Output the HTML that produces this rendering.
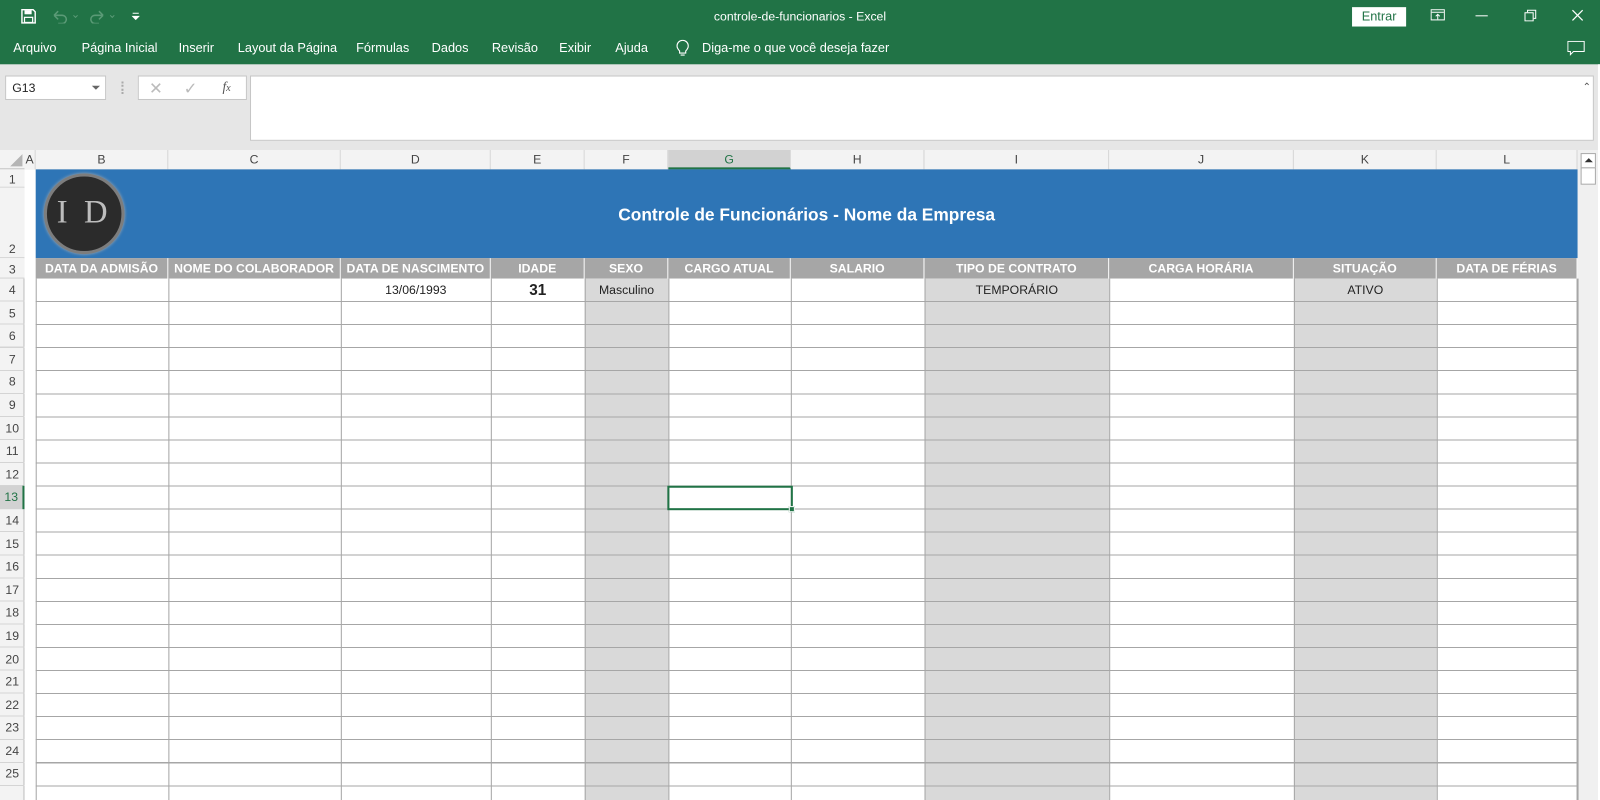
<!DOCTYPE html>
<html><head><meta charset="utf-8"><style>
*{margin:0;padding:0;box-sizing:border-box}
body{width:1600px;height:784px;overflow:hidden;background:#e6e6e6;font-family:"Liberation Sans",sans-serif;position:relative}
#w{position:absolute;left:0;top:0;width:1568px;height:768px;transform:scale(1.020408);transform-origin:0 0}
.a{position:absolute}
.top{left:0;top:0;width:1568px;height:63px;background:#217346;color:#fff}
.tab{position:absolute;top:40px;font-size:12.5px;color:#fff}
.ch{position:absolute;top:147px;height:19px;font-size:12px;color:#444;text-align:center;line-height:19px;border-right:1px solid #d4d4d4;background:#f3f3f3}
.rh{position:absolute;left:0;width:24px;font-size:12px;color:#444;text-align:center;background:#f3f3f3;border-bottom:1px solid #d4d4d4}
.hd{position:absolute;top:253px;height:20px;background:#a6a6a6;color:#fff;font-weight:bold;font-size:12px;text-align:center;line-height:21px;border-right:1px solid #fff;white-space:nowrap;overflow:hidden}
.vl{position:absolute;top:273px;width:1px;height:511px;background:#a6a6a6}
.gc{position:absolute;top:273px;height:511px;background:#d9d9d9}
.t4{position:absolute;top:273px;height:23px;line-height:23px;font-size:12px;color:#222;text-align:center}
</style></head><body><div id="w">
<div class="a top">
  <svg class="a" style="left:20px;top:8px" width="16" height="16" viewBox="0 0 16 16"><path d="M1.5 1.5h11l2 2v11h-13z" fill="none" stroke="#fff" stroke-width="1.4"/><rect x="4" y="2" width="7" height="4" fill="#fff"/><rect x="4" y="9" width="8" height="5" fill="none" stroke="#fff" stroke-width="1.2"/></svg>
  <svg class="a" style="left:50px;top:9px" width="40" height="14" viewBox="0 0 40 14"><path d="M3 6h8a4 4 0 0 1 0 8H7M3 6l4-4M3 6l4 4" fill="none" stroke="#5a9a76" stroke-width="1.5"/><path d="M22 6l2 2 2-2" fill="none" stroke="#5a9a76"/></svg>
  <svg class="a" style="left:88px;top:9px" width="40" height="14" viewBox="0 0 40 14"><path d="M13 6H5a4 4 0 0 0 0 8h4M13 6L9 2M13 6l-4 4" fill="none" stroke="#5a9a76" stroke-width="1.5"/><path d="M20 6l2 2 2-2" fill="none" stroke="#5a9a76"/></svg>
  <svg class="a" style="left:129px;top:12px" width="8" height="8" viewBox="0 0 8 8"><path d="M1 1h6M1 4h6L4 7z" fill="#fff" stroke="#fff"/></svg>
  <div class="a" style="left:0;width:1568px;top:9px;text-align:center;font-size:12px">controle-de-funcionarios  -  Excel</div>
  <div class="a" style="left:1325px;top:7px;width:53px;height:19px;background:#fff;color:#217346;font-size:12.5px;text-align:center;line-height:19px">Entrar</div>
  <svg class="a" style="left:1402px;top:9px" width="14" height="12" viewBox="0 0 14 12"><rect x=".5" y=".5" width="13" height="10" fill="none" stroke="#fff"/><path d="M1 3h12M7 10V5M5 7l2-2 2 2" stroke="#fff" fill="none"/></svg>
  <div class="a" style="left:1446px;top:15px;width:12px;height:1px;background:#fff"></div>
  <svg class="a" style="left:1494px;top:9px" width="12" height="12" viewBox="0 0 12 12"><rect x=".5" y="3.5" width="8" height="8" fill="none" stroke="#fff"/><path d="M3 3V1h8v8H9" fill="none" stroke="#fff"/></svg>
  <svg class="a" style="left:1540px;top:9px" width="12" height="12" viewBox="0 0 12 12"><path d="M1 1l10 10M11 1L1 11" stroke="#fff" stroke-width="1.2"/></svg>
  <div class="tab" style="left:13px">Arquivo</div>
  <div class="tab" style="left:80px">Página Inicial</div>
  <div class="tab" style="left:175px">Inserir</div>
  <div class="tab" style="left:233px">Layout da Página</div>
  <div class="tab" style="left:349px">Fórmulas</div>
  <div class="tab" style="left:423px">Dados</div>
  <div class="tab" style="left:482px">Revisão</div>
  <div class="tab" style="left:548px">Exibir</div>
  <div class="tab" style="left:603px">Ajuda</div>
  <svg class="a" style="left:662px;top:39px" width="14" height="17" viewBox="0 0 14 17"><path d="M4 11C2 9 1.5 8 1.5 6a5.5 5.5 0 0 1 11 0c0 2-.5 3-2.5 5v2H4z M5 15h4" fill="none" stroke="#fff" stroke-width="1.1"/></svg>
  <div class="tab" style="left:688px">Diga-me o que você deseja fazer</div>
  <svg class="a" style="left:1536px;top:40px" width="18" height="16" viewBox="0 0 18 16"><path d="M.5.5h16v10H6l-3 3v-3H.5z" fill="none" stroke="#fff"/></svg>
</div>
<div class="a" style="left:5px;top:74px;width:99px;height:24px;background:#fff;border:1px solid #c6c6c6;font-size:12px;line-height:22px;padding-left:6px;color:#222">G13</div>
<div class="a" style="left:90px;top:84px;border:4px solid transparent;border-top:4px solid #666"></div>
<div class="a" style="left:119px;top:80px;width:2px;height:12px;border-left:2px dotted #aaa"></div>
<div class="a" style="left:135px;top:74px;width:107px;height:24px;background:#fff;border:1px solid #c6c6c6"></div>
<div class="a" style="left:146px;top:77px;font-size:16px;color:#bbb">✕</div>
<div class="a" style="left:180px;top:77px;font-size:16px;color:#bbb">✓</div>
<div class="a" style="left:218px;top:77px;font-size:13px;color:#555;font-style:italic;font-family:'Liberation Serif',serif">f<span style="font-size:10px">x</span></div>
<div class="a" style="left:245px;top:74px;width:1317px;height:64px;background:#fff;border:1px solid #c6c6c6"></div>
<div class="a" style="left:1551px;top:80px;font-size:10px;color:#555">⌃</div>

<div class="a" style="left:0;top:147px;width:1546px;height:19px;background:#f3f3f3;border-bottom:1px solid #bdbdbd"></div>
<div class="a" style="left:10px;top:151px;width:0;height:0;border-left:12px solid transparent;border-bottom:12px solid #b5b5b5"></div>
<div class="ch" style="left:24px;width:11px">A</div>
<div class="ch" style="left:35px;width:130px">B</div>
<div class="ch" style="left:165px;width:169px">C</div>
<div class="ch" style="left:334px;width:147px">D</div>
<div class="ch" style="left:481px;width:92px">E</div>
<div class="ch" style="left:573px;width:82px">F</div>
<div class="ch" style="left:655px;width:120px;background:#d2d2d2;border-bottom:2px solid #217346;color:#217346">G</div>
<div class="ch" style="left:775px;width:131px">H</div>
<div class="ch" style="left:906px;width:181px">I</div>
<div class="ch" style="left:1087px;width:181px">J</div>
<div class="ch" style="left:1268px;width:140px">K</div>
<div class="ch" style="left:1408px;width:138px">L</div>

<div class="a" style="left:1546px;top:147px;width:20px;height:637px;background:#f0f0f0"></div>
<div class="a" style="left:1549px;top:150px;width:15px;height:15px;background:#fff;border:1px solid #aaa"></div>
<div class="a" style="left:1553px;top:155px;border:4px solid transparent;border-bottom:4px solid #333;border-top:0"></div>
<div class="a" style="left:1549px;top:164px;width:15px;height:17px;background:#fff;border:1px solid #aaa"></div>
<div class="a" style="left:1566px;top:63px;width:10px;height:721px;background:#fff"></div>

<div class="a" style="left:0;top:166px;width:24px;height:618px;background:#f3f3f3;border-right:1px solid #bdbdbd"></div>
<div class="a" style="left:24px;top:166px;width:11px;height:618px;background:#fff"></div>
<div class="rh" style="top:166px;height:18px;line-height:20px">1</div>
<div class="rh" style="top:184px;height:69px;line-height:120px">2</div>
<div class="rh" style="top:253px;height:20px;line-height:22px">3</div>
<div class="a" style="left:0;top:273px;width:24px;height:511px;background:repeating-linear-gradient(to bottom,transparent 0,transparent 21.6px,#d4d4d4 21.6px,#d4d4d4 22.6px);font-size:12px;color:#444;text-align:center;line-height:22.6px">
4<br>5<br>6<br>7<br>8<br>9<br>10<br>11<br>12<br><span style="display:block;background:#d2d2d2;color:#217346;border-right:2px solid #217346;height:22.6px">13</span>14<br>15<br>16<br>17<br>18<br>19<br>20<br>21<br>22<br>23<br>24<br>25</div>

<div class="a" style="left:35px;top:166px;width:1511px;height:87px;background:#2e75b6"></div>
<div class="a" style="left:43px;top:170px;width:79px;height:79px;border-radius:50%;background:#2b2b2b;border:3px solid #7d7d7d;box-shadow:0 0 3px #aaa"></div>
<div class="a" style="left:43px;top:189px;width:79px;text-align:center;font-family:'Liberation Serif',serif;font-size:32px;color:#bdbdbd;letter-spacing:4px">I D</div>
<div class="a" style="left:35px;top:201px;width:1511px;text-align:center;color:#fff;font-weight:bold;font-size:17px">Controle de Funcionários - Nome da Empresa</div>

<div class="hd" style="left:35px;width:130px">DATA DA ADMISÃO</div>
<div class="hd" style="left:165px;width:169px">NOME DO COLABORADOR</div>
<div class="hd" style="left:334px;width:147px">DATA DE NASCIMENTO</div>
<div class="hd" style="left:481px;width:92px">IDADE</div>
<div class="hd" style="left:573px;width:82px">SEXO</div>
<div class="hd" style="left:655px;width:120px">CARGO ATUAL</div>
<div class="hd" style="left:775px;width:131px">SALARIO</div>
<div class="hd" style="left:906px;width:181px">TIPO DE CONTRATO</div>
<div class="hd" style="left:1087px;width:181px">CARGA HORÁRIA</div>
<div class="hd" style="left:1268px;width:140px">SITUAÇÃO</div>
<div class="hd" style="left:1408px;width:138px">DATA DE FÉRIAS</div>

<div class="a" style="left:35px;top:273px;width:1511px;height:511px;background:#fff"></div>
<div class="gc" style="left:573px;width:82px"></div>
<div class="gc" style="left:906px;width:181px"></div>
<div class="gc" style="left:1268px;width:140px"></div>
<div class="a" style="left:35px;top:295px;width:1511px;height:489px;background:repeating-linear-gradient(to bottom,#a6a6a6 0,#a6a6a6 1px,transparent 1px,transparent 22.6px)"></div>
<div class="vl" style="left:35px"></div>
<div class="vl" style="left:165px"></div>
<div class="vl" style="left:334px"></div>
<div class="vl" style="left:481px"></div>
<div class="vl" style="left:573px"></div>
<div class="vl" style="left:655px"></div>
<div class="vl" style="left:775px"></div>
<div class="vl" style="left:906px"></div>
<div class="vl" style="left:1087px"></div>
<div class="vl" style="left:1268px"></div>
<div class="vl" style="left:1408px"></div>
<div class="vl" style="left:1545px;width:2px"></div>

<div class="t4" style="left:334px;width:147px">13/06/1993</div>
<div class="t4" style="left:481px;width:92px;font-weight:bold;font-size:15px">31</div>
<div class="t4" style="left:573px;width:82px">Masculino</div>
<div class="t4" style="left:906px;width:181px">TEMPORÁRIO</div>
<div class="t4" style="left:1268px;width:140px">ATIVO</div>

<div class="a" style="left:654px;top:476px;width:123px;height:24px;border:2px solid #217346"></div>
<div class="a" style="left:773px;top:496px;width:6px;height:6px;background:#217346;border:1px solid #fff"></div>
</div></body></html>
